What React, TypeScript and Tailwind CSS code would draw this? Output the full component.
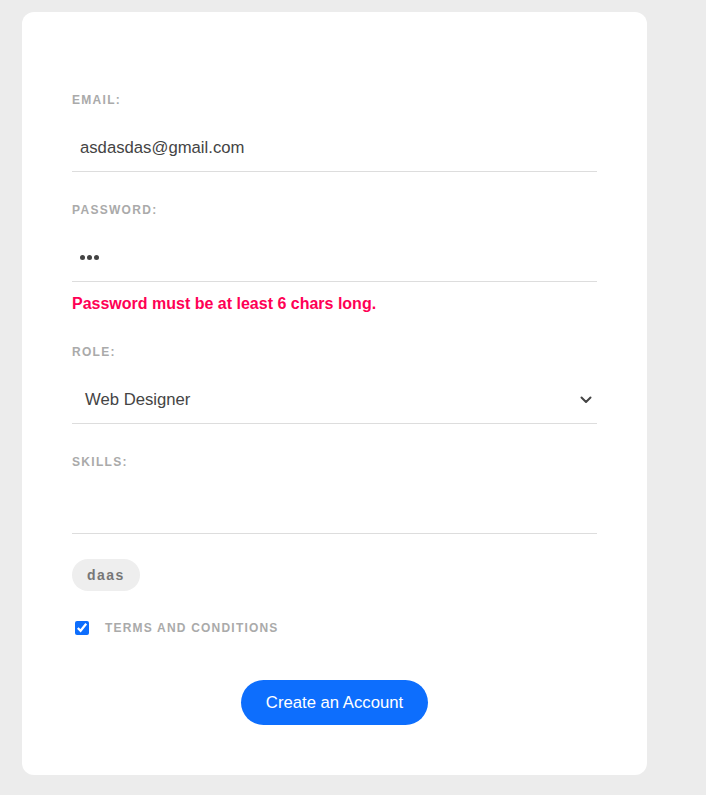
import React from "react";

const labelCls =
  "block text-[12px] leading-[14px] font-bold tracking-[1.3px] text-[#aaaaaa] uppercase";

export default function App() {
  return (
    <div
      className="min-h-[795px] w-full bg-[#ececec] pt-[12px] pb-[20px] pl-[22px]"
      style={{ fontFamily: '"Liberation Sans", Arial, sans-serif' }}
    >
      <div className="w-[625px] rounded-[12px] bg-white px-[50px] pt-[81px] pb-[50px]">
        {/* Email */}
        <label className={labelCls}>Email:</label>
        <div className="mt-[17px] flex h-[48px] items-center border-b border-[#dddddd] pl-[8px] text-[16.7px] text-[#444444]">
          asdasdas@gmail.com
        </div>

        {/* Password */}
        <label className={`${labelCls} mt-[31px]`}>Password:</label>
        <div className="mt-[17px] flex h-[48px] items-center border-b border-[#dddddd] pl-[8px] text-[16px] text-[#444444]">
          <span className="flex gap-[2px]">
            <span className="h-[5px] w-[5px] rounded-full bg-[#444]" />
            <span className="h-[5px] w-[5px] rounded-full bg-[#444]" />
            <span className="h-[5px] w-[5px] rounded-full bg-[#444]" />
          </span>
        </div>
        <div className="mt-[12px] text-[16px] leading-[20px] font-bold text-[#ff0055]">
          Password must be at least 6 chars long.
        </div>

        {/* Role */}
        <label className={`${labelCls} mt-[31px]`}>Role:</label>
        <div className="mt-[17px] flex h-[48px] items-center justify-between border-b border-[#dddddd] pl-[13px] pr-[5px] text-[16.7px] text-[#444444]">
          <span>Web Designer</span>
          <svg width="12" height="8" viewBox="0 0 12 8" fill="none">
            <path
              d="M1.5 1.5 L6 6 L10.5 1.5"
              stroke="#444"
              strokeWidth="2"
              strokeLinecap="round"
              strokeLinejoin="round"
            />
          </svg>
        </div>

        {/* Skills */}
        <label className={`${labelCls} mt-[31px]`}>Skills:</label>
        <div className="mt-[17px] h-[48px] border-b border-[#dddddd]" />

        <div className="mt-[25px] flex">
          <span className="flex h-[32px] items-center rounded-full bg-[#eeeeee] px-[15px] text-[14px] font-bold tracking-[1.5px] text-[#777777]">
            daas
          </span>
        </div>

        <div className="mt-[28px] flex items-center">
          <input
            type="checkbox"
            defaultChecked
            className="ml-[3px] mr-[3px] h-[14px] w-[14px] accent-[#0d6efd]"
          />
          <span className="ml-[13px] text-[12px] font-bold tracking-[1.2px] text-[#aaaaaa]">
            TERMS AND CONDITIONS
          </span>
        </div>

        <div className="mt-[43px] flex justify-center">
          <button className="h-[45px] w-[187px] rounded-full bg-[#0d6efd] text-[16.7px] text-white">
            Create an Account
          </button>
        </div>
      </div>
    </div>
  );
}
